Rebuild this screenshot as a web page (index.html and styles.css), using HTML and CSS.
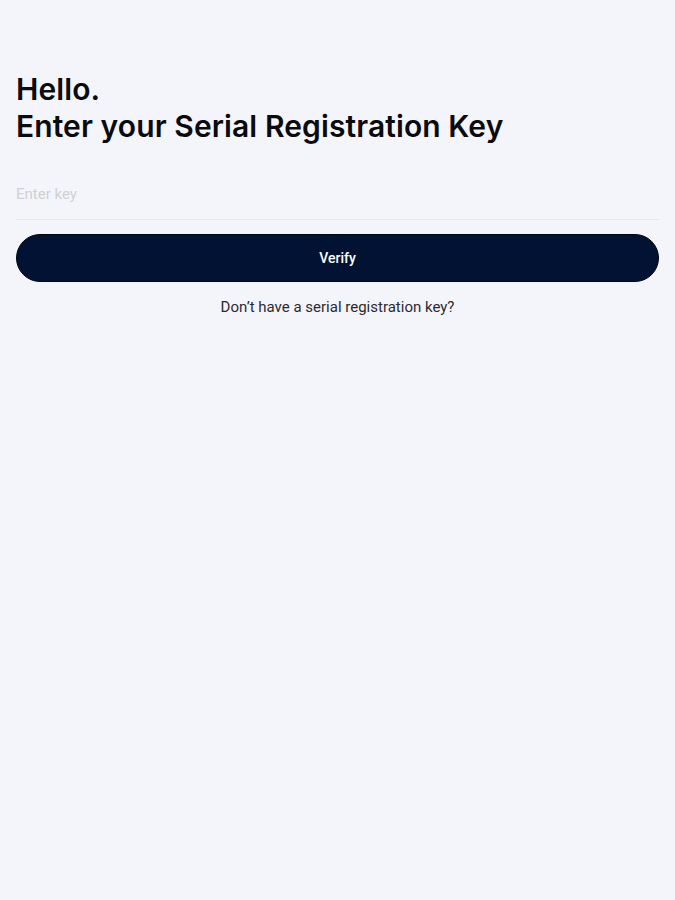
FILE: index.html
```html
<!DOCTYPE html>
<html lang="en">
<head>
<meta charset="utf-8">
<link rel="stylesheet" href="styles.css">
<title>Registration</title>
</head>
<body>
<main class="page">
  <h1 class="title">Hello.<br>Enter your Serial Registration Key</h1>
  <div class="field">
    <input class="key-input" type="text" placeholder="Enter key">
  </div>
  <button class="verify">Verify</button>
  <p class="hint">Don’t have a serial registration key?</p>
</main>
</body>
</html>
```

FILE: styles.css
```css
html, body {
  margin: 0;
  padding: 0;
  background: #f4f5fa;
}
body {
  font-family: Roboto, "Liberation Sans", sans-serif;
  min-height: 900px;
}
.page {
  padding: 71px 16px 0 16px;
  display: flex;
  flex-direction: column;
}
.title {
  margin: 0;
  font-family: Inter, "Liberation Sans", sans-serif;
  font-weight: 600;
  font-size: 30px;
  line-height: 37px;
  color: #0b0b0f;
  letter-spacing: 0.1px;
}
.field {
  margin-top: 37px;
  border-bottom: 1px solid #e6e7ec;
  height: 37px;
  display: flex;
  align-items: flex-start;
}
.key-input {
  border: none;
  outline: none;
  background: transparent;
  font-family: Roboto, "Liberation Sans", sans-serif;
  font-size: 15px;
  padding: 0;
  margin-top: 2px;
  height: 20px;
  width: 100%;
  color: #222;
}
.key-input::placeholder {
  color: #cfd0d5;
}
.verify {
  margin-top: 14px;
  height: 48px;
  border-radius: 24px;
  background: #021233;
  border: 1px solid #000814;
  color: #ffffff;
  font-family: Roboto, "Liberation Sans", sans-serif;
  font-weight: 500;
  font-size: 14px;
  width: 100%;
}
.hint {
  margin: 17px 0 0 0;
  text-align: center;
  font-size: 15px;
  line-height: 16px;
  color: #2b2b2f;
}
```
